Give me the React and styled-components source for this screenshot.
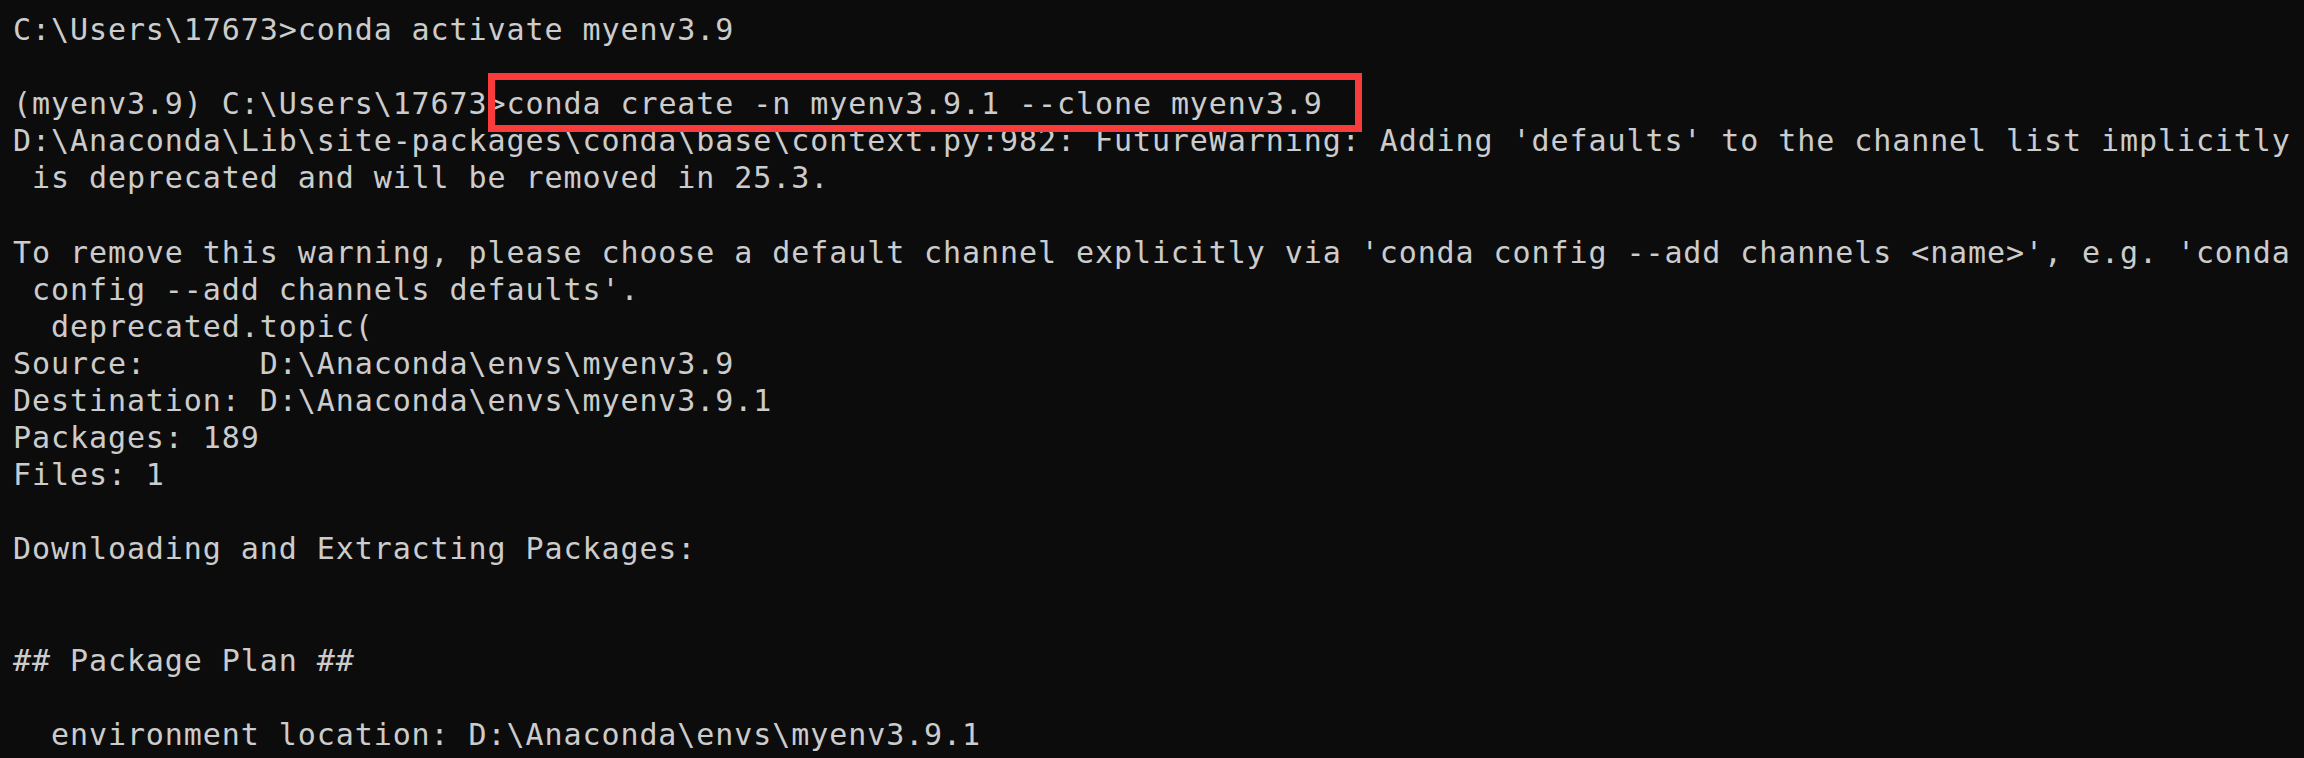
import React from "react";
import styled, { createGlobalStyle } from "styled-components";

const Global = createGlobalStyle`
  html, body {
    margin: 0;
    padding: 0;
    background: #0c0c0c;
    width: 2304px;
    height: 758px;
    overflow: hidden;
  }
`;

const Terminal = styled.div`
  box-sizing: border-box;
  width: 2304px;
  height: 758px;
  overflow: hidden;
  background: #0c0c0c;
  color: #cccccc;
  padding: 11px 0 0 13px;
  font-family: "DejaVu Sans Mono", "Liberation Mono", monospace;
  font-size: 30px;
  letter-spacing: 0.92px;
  display: flex;
  flex-direction: column;
`;

const Line = styled.div`
  height: 37.1px;
  line-height: 37.1px;
  white-space: pre;
`;

const Highlight = styled.span`
  position: relative;
  &::after {
    content: "";
    position: absolute;
    left: -19px;
    right: -39px;
    top: -13px;
    bottom: -11px;
    border: 7px solid #f93b3b;
    pointer-events: none;
  }
`;

const lines = [
  "C:\\Users\\17673>conda activate myenv3.9",
  "",
  null,
  "D:\\Anaconda\\Lib\\site-packages\\conda\\base\\context.py:982: FutureWarning: Adding 'defaults' to the channel list implicitly",
  " is deprecated and will be removed in 25.3.",
  "",
  "To remove this warning, please choose a default channel explicitly via 'conda config --add channels <name>', e.g. 'conda",
  " config --add channels defaults'.",
  "  deprecated.topic(",
  "Source:      D:\\Anaconda\\envs\\myenv3.9",
  "Destination: D:\\Anaconda\\envs\\myenv3.9.1",
  "Packages: 189",
  "Files: 1",
  "",
  "Downloading and Extracting Packages:",
  "",
  "",
  "## Package Plan ##",
  "",
  "  environment location: D:\\Anaconda\\envs\\myenv3.9.1",
];

export default function App() {
  return (
    <>
      <Global />
      <Terminal>
        {lines.map((text, i) =>
          text === null ? (
            <Line key={i}>
              {"(myenv3.9) C:\\Users\\17673>"}
              <Highlight>conda create -n myenv3.9.1 --clone myenv3.9</Highlight>
            </Line>
          ) : (
            <Line key={i}>{text}</Line>
          )
        )}
      </Terminal>
    </>
  );
}
